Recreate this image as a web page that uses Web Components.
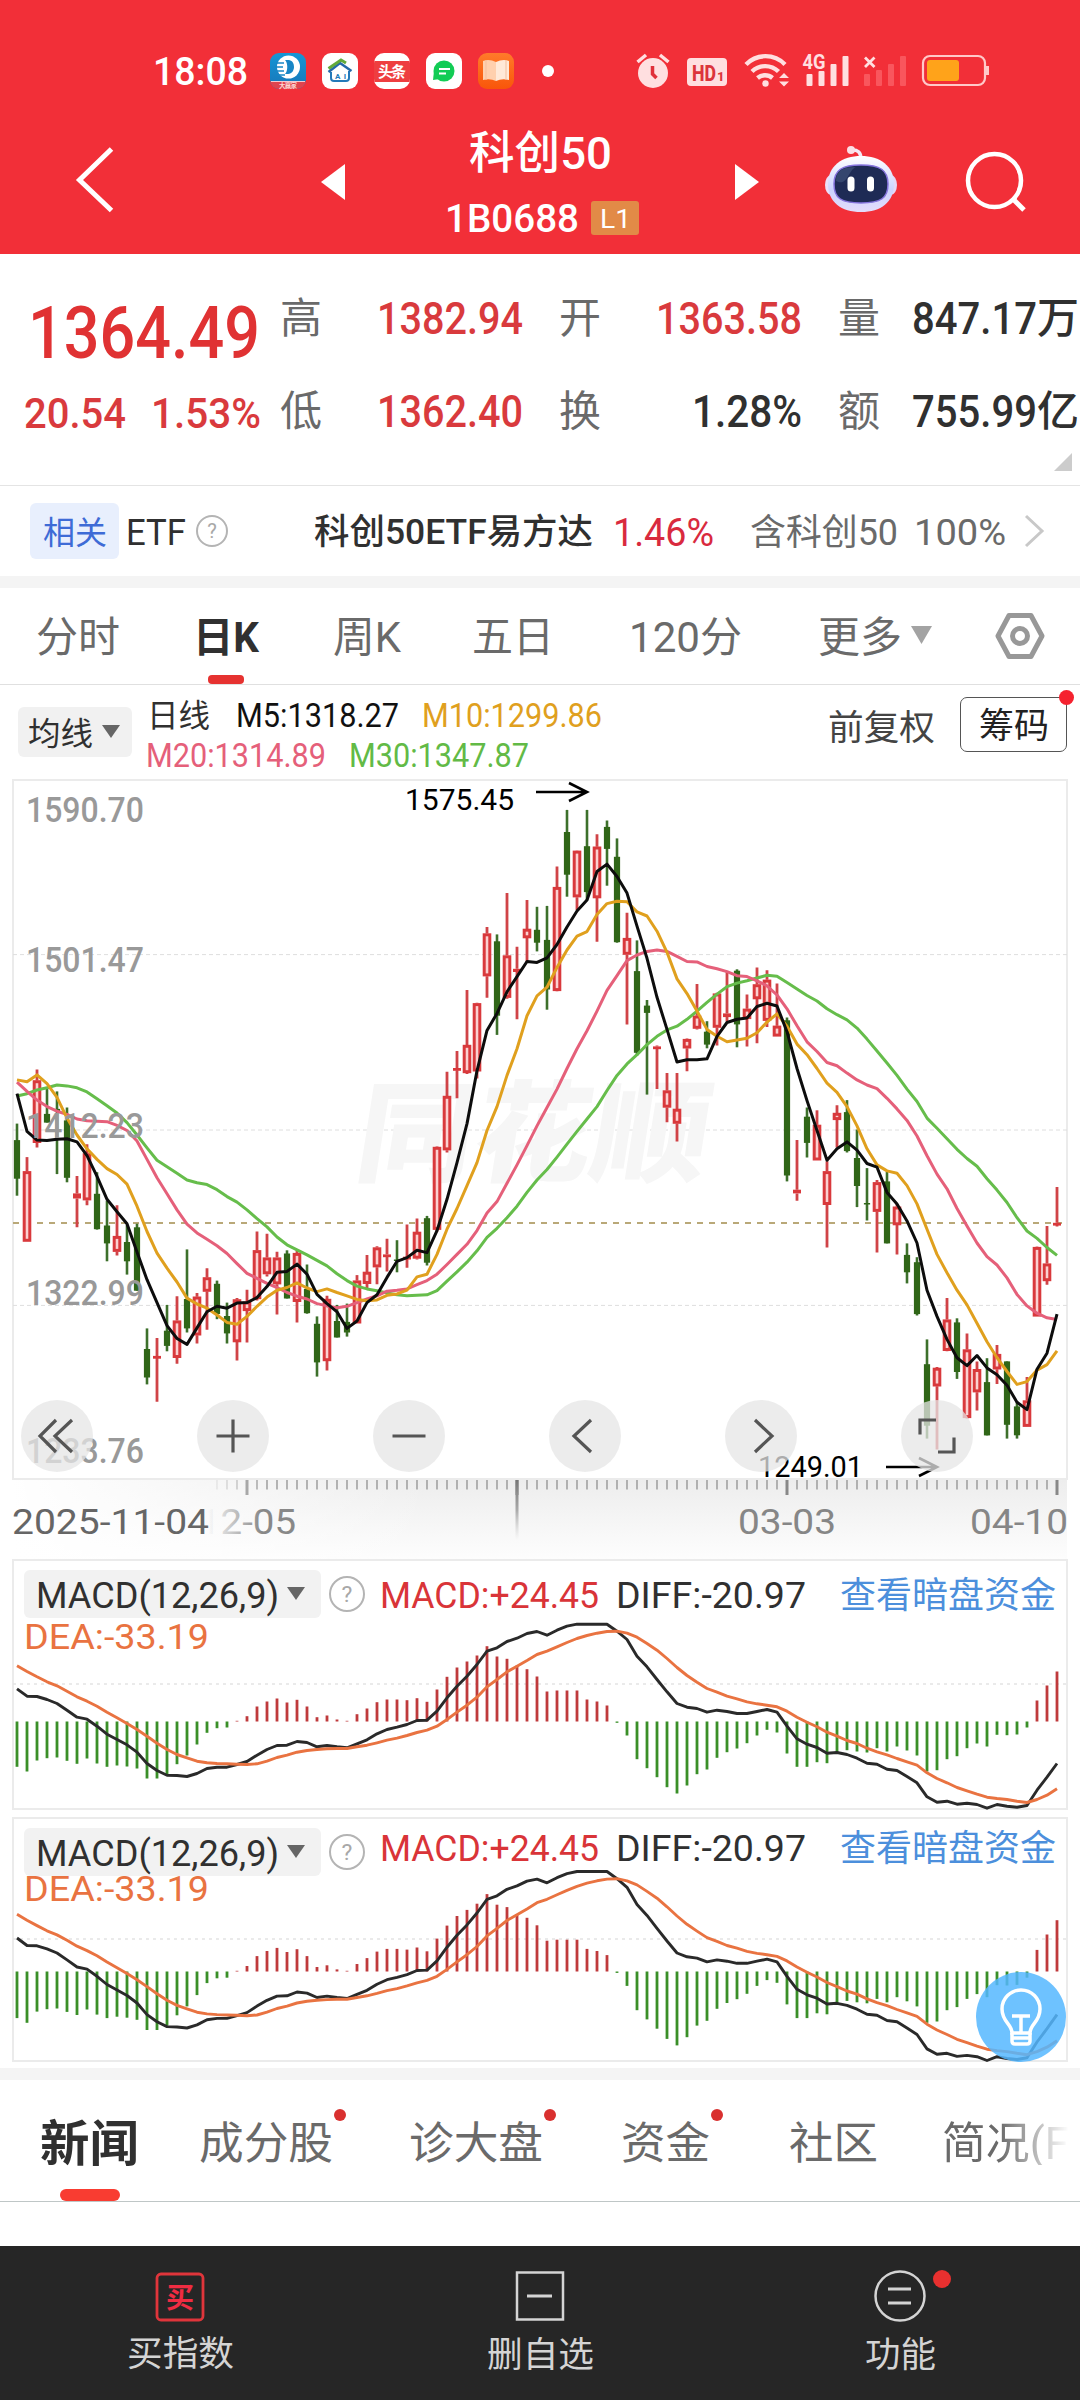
<!DOCTYPE html>
<html lang="zh-CN">
<head>
<meta charset="utf-8">
<title>科创50</title>
<style>
html,body{margin:0;padding:0;background:#fff}
body{width:1080px;height:2400px;overflow:hidden;font-family:Roboto,"Noto Sans CJK SC",sans-serif}
</style>
</head>
<body>
<stock-page></stock-page>
<script>
const define=(name,html,init)=>{
  const t=document.createElement('template');t.innerHTML=html;
  customElements.define(name,class extends HTMLElement{
    connectedCallback(){
      if(this.shadowRoot)return;
      const r=this.attachShadow({mode:'open'});
      const f=t.content.cloneNode(true);
      if(init)init(this,f);
      r.appendChild(f);
    }
  });
};

/* Page */
define('stock-page',`<style>:host{display:flex;flex-direction:column;width:1080px;height:2400px;background:#fff;overflow:hidden}
.band{height:12px;background:#f4f4f4;flex:none}</style>
<app-header></app-header><quote-panel></quote-panel><related-row></related-row><div class="band"></div>
<period-tabs></period-tabs><ma-legend></ma-legend><k-chart></k-chart><date-axis></date-axis>
<macd-chart height="251" shift="0" zero="162.5" scale="1" grid="125"></macd-chart>
<macd-chart height="245" shift="-10" zero="154.5" scale="1.027" grid="122" style="margin-top:7px"><tip-button></tip-button></macd-chart>
<div class="band" style="margin-top:6px"></div><news-tabs></news-tabs><bottom-bar></bottom-bar>`);

/* Header */
define('app-header',`<style>:host{display:flex;flex-direction:column;height:254px;background:#f22f38;color:#fff;flex:none}
.status{display:flex;height:142px;box-sizing:border-box;padding-left:153px}
.status>*{flex:none}
svg{display:block}
.nav{display:flex;height:112px;align-items:flex-start}.nav>*{flex:none}
.mid{display:flex;flex-direction:column;align-items:flex-start;width:200px;margin-left:95px}
.sub{display:flex;align-items:center;margin-top:11px}
.lv{display:flex;width:48px;height:34px;background:#e28a47;border-radius:3px;margin-left:12px;align-items:center;justify-content:center}
</style>
<div class="status">
<fit-text w="95" s="38" b="500" style="margin-top:51px">18:08</fit-text>
<svg width="720" height="60" viewBox="270 40 720 60" style="margin:40px 0 0 22px">
<defs><linearGradient id="bl" x1="0" y1="0" x2="0" y2="1"><stop offset="0" stop-color="#1596d6"/><stop offset="1" stop-color="#1876b8"/></linearGradient>
<linearGradient id="or" x1="0" y1="0" x2="0" y2="1"><stop offset="0" stop-color="#ff7a2a"/><stop offset="1" stop-color="#f9560a"/></linearGradient>
<clipPath id="c1"><rect x="270" y="53" width="36" height="36" rx="9"/></clipPath><clipPath id="c2"><rect x="374" y="53" width="36" height="36" rx="10"/></clipPath></defs>
<g clip-path="url(#c1)"><rect x="270" y="53" width="36" height="36" fill="url(#bl)"/><rect x="270" y="81" width="36" height="8" fill="#e0434e"/><path d="M271 81.500h34" stroke="#f4c9d0" stroke-width="1"/></g>
<circle cx="288.500" cy="67" r="11.500" fill="#fff"/><path d="M285 60h4c4 1 5 4 5 7s-2 7-6 7h-3c3-3 3-11 0-14z" fill="#1886c6"/><path d="M276 63h8M275 67h8M276 71h8M278 75h7" stroke="#1886c6" stroke-width="1.500"/>
<text x="279" y="87.500" font-size="6.500" font-weight="700" fill="#fbd5d0" textLength="18">大赢家</text>
<rect x="322" y="53" width="36" height="36" rx="9" fill="#fff"/>
<path d="M331 72v6q0 3 3 3h12q3 0 3-3v-7" fill="none" stroke="#2379b9" stroke-width="2"/><path d="M328.500 72L340 63l11.500 8" fill="none" stroke="#2468a9" stroke-width="2.500"/><path d="M328.500 68.500L341 60l5 3" fill="none" stroke="#63aa3a" stroke-width="3"/>
<text x="335" y="78.500" font-size="8" font-weight="700" fill="#2379b9" textLength="11">AI</text>
<g clip-path="url(#c2)"><rect x="374" y="53" width="36" height="36" fill="#fff"/><rect x="373" y="61" width="38" height="21" fill="#ee3e40"/></g>
<text x="378" y="77" font-size="15" font-weight="700" fill="#fff" textLength="28">头条</text>
<rect x="426" y="53" width="36" height="36" rx="9" fill="#fff"/><circle cx="444" cy="71" r="10.500" fill="#12cc55"/><path d="M434 71l-1 9 7-1" fill="#12cc55"/><path d="M439 69h11M439 73.500h7" stroke="#fff" stroke-width="1.800"/>
<rect x="478" y="53" width="36" height="36" rx="9" fill="url(#or)"/><path d="M483 61q6-2.500 13 1v19q-6-3-13-1z" fill="#ffd0ae"/><path d="M509 61q-6-2.500-13 1v19q6-3 13-1z" fill="#ffe9d8"/><path d="M486 60v20M506 60v20" stroke="#f3bf9f" stroke-width="1"/>
<circle cx="548" cy="71" r="6" fill="#fff"/>
<g fill="#ffdfe0"><circle cx="653" cy="73" r="15"/><path d="M637.500 62l8.500-7M668.500 62l-8.500-7" stroke="#ffdfe0" stroke-width="3.500"/><path d="M652.500 66v8l4 4" fill="none" stroke="#e0303a" stroke-width="3.500"/>
<rect x="687" y="58" width="40" height="28" rx="4"/></g>
<text x="692" y="80.500" font-size="22" font-weight="800" fill="#dc343c" textLength="24" lengthAdjust="spacingAndGlyphs">HD</text><text x="717" y="80.500" font-size="13" font-weight="800" fill="#dc343c">1</text>
<g fill="none" stroke="#ffdfe0" stroke-width="4.400"><path d="M746 64.500a27 27 0 0 1 39 0"/><path d="M752 71.500a19 19 0 0 1 26.500 0"/><path d="M757.500 78a11.500 11.500 0 0 1 15 0"/></g>
<circle cx="765.500" cy="83.500" r="3.200" fill="#ffdfe0"/><path d="M779 78l5-5 5 5zM779 81.500l5 5 5-5z" fill="#ffdfe0"/>
<text x="802.500" y="69" font-size="20" font-weight="700" fill="#ffdfe0" textLength="23" lengthAdjust="spacingAndGlyphs">4G</text>
<g fill="#ffdfe0"><rect x="806.500" y="74" width="6" height="12" rx="1"/><rect x="818.500" y="71" width="6" height="15" rx="1"/><rect x="830.500" y="64" width="6" height="22" rx="1"/><rect x="842.500" y="56" width="6" height="30" rx="1"/></g>
<g fill="#f9565d"><rect x="864" y="74" width="6" height="12" rx="1"/><rect x="876" y="70" width="6" height="16" rx="1"/><rect x="888" y="64" width="6" height="22" rx="1"/><rect x="900" y="56" width="6" height="30" rx="1"/></g>
<path d="M865 57.500l9.500 9.500M874.500 57.500l-9.500 9.500" stroke="#ffdfe0" stroke-width="2.800"/>
<rect x="923" y="56" width="62" height="29" rx="7" fill="none" stroke="#ffc9c9" stroke-width="2.200"/><rect x="927" y="60" width="32" height="21" rx="3" fill="#ffa31a"/><path d="M987.500 66v9" stroke="#ffc9c9" stroke-width="3"/>
</svg></div>
<div class="nav" style="margin-top:-18px">
<svg width="350" height="100" viewBox="0 124 350 100"><path d="M111.500 149L79.500 180l32 30.500" fill="none" stroke="#fff" stroke-width="5"/><path d="M345 164v36l-24-18z" fill="#fff"/></svg>
<div class="mid" style="margin-left:94px"><fit-text w="143" s="45" b="500" style="margin:5px 0 0 25px">科创50</fit-text>
<div class="sub" style="margin-top:24px"><fit-text w="134" s="39" b="500" style="margin-left:1px">1B0688</fit-text><div class="lv"><fit-text w="31" s="25">L1</fit-text></div></div></div>
<svg width="420" height="100" viewBox="644 124 420 100"><defs><linearGradient id="rb" x1="0" y1="0" x2="0" y2="1"><stop offset="0" stop-color="#fff"/><stop offset=".6" stop-color="#ccd3ff"/><stop offset="1" stop-color="#e3dcfb"/></linearGradient></defs>
<path d="M735 164v36l24-18z" fill="#fff"/>
<path d="M851 150q10-1 10 9" fill="none" stroke="#f5e9f5" stroke-width="3.500"/><circle cx="851" cy="150" r="4" fill="#fbdfe6"/>
<ellipse cx="831" cy="185" rx="6" ry="10" fill="#ecdff8"/><ellipse cx="891" cy="185" rx="6" ry="10" fill="#e5d7f6"/>
<path d="M828 184c0-18 14-28 33-28s33 10 33 28-13 28-33 28-33-10-33-28z" fill="url(#rb)"/>
<path d="M834 184c0-14 8-19 27-19s27 5 27 19-7 19-27 19-27-5-27-19z" fill="#1e2b55" stroke="#8574dd" stroke-width="1.500"/><path d="M836 181c0-10 6-14 20-14-8 3-8 20-20 14z" fill="#45597f" opacity=".6"/>
<path d="M851 180v8M870.500 180v8" stroke="#fff" stroke-width="7" stroke-linecap="round"/>
<circle cx="994.500" cy="180.500" r="26.500" fill="none" stroke="#fff" stroke-width="4.500"/><path d="M1013 199l11 11" stroke="#fff" stroke-width="5"/></svg>
</div>`);

/* Quote */
define('quote-panel',`<style>:host{display:flex;height:231px;flex:none;border-bottom:1.500px solid #e4e4e4;color:#303030;box-sizing:content-box}
.l{width:278px;padding-left:24px;box-sizing:border-box;display:flex;flex-direction:column;color:#e03233}
.row{display:flex;align-items:center}
.g{display:flex;flex-direction:column;color:#303030;width:802px;flex:none}
.r{color:#d93a3d}.k{color:#6a6a6a}
svg{align-self:flex-end;margin-right:8px;margin-top:24px}</style>
<div class="l"><fit-text w="232" s="73" b="500" style="margin:41px 0 0 4px">1364.49</fit-text>
<div class="row" style="margin-top:22px"><fit-text class="r" w="102" s="43" b="500">20.54</fit-text><fit-text class="r" w="110" s="43" b="500" m="25">1.53%</fit-text></div></div>
<div class="g"><div class="row" style="margin-top:40px;height:46px"><fit-text class="k" w="42" s="42" m="2">高</fit-text><fit-text class="r" w="146" s="44" b="500" m="55">1382.94</fit-text><fit-text class="k" w="42" s="42" m="36">开</fit-text><fit-text class="r" w="146" s="44" b="500" m="55">1363.58</fit-text><fit-text class="k" w="42" s="42" m="36">量</fit-text><fit-text w="125" s="44" b="500" m="32">847.17</fit-text><fit-text w="42" s="42" b="500" m="0">万</fit-text></div>
<div class="row" style="margin-top:47px;height:46px"><fit-text class="k" w="42" s="42" m="2">低</fit-text><fit-text class="r" w="146" s="44" b="500" m="55">1362.40</fit-text><fit-text class="k" w="42" s="42" m="36">换</fit-text><fit-text w="110" s="44" b="500" m="91">1.28%</fit-text><fit-text class="k" w="42" s="42" m="36">额</fit-text><fit-text w="125" s="44" b="500" m="32">755.99</fit-text><fit-text w="42" s="42" b="500" m="0">亿</fit-text></div>
<svg width="18" height="18" style="margin-top:20px"><path d="M18 0v18H0z" fill="#ccc"/></svg></div>`);

const HELP=(r)=>`<svg width="${2*r+4}" height="${2*r+4}" viewBox="${-r-2} ${-r-2} ${2*r+4} ${2*r+4}"><circle r="${r}" fill="#fff" stroke="#b4b4b4" stroke-width="2"/><text y="${r*.48}" text-anchor="middle" font-size="${r*1.35}" fill="#a8a8a8">?</text></svg>`;

define('related-row',`<style>:host{display:flex;height:89.500px;flex:none;align-items:center;color:#303030}
.tag{display:flex;align-items:center;justify-content:center;width:89px;height:56px;margin-left:30px;background:#e8effd;border-radius:6px;color:#3e6bd6}
svg{margin-left:9px}</style>
<div class="tag"><fit-text w="64" s="32">相关</fit-text></div><fit-text w="60" s="36" m="7">ETF</fit-text>${HELP(15)}
<fit-text w="279" s="35" b="500" m="85">科创50ETF易方达</fit-text><fit-text w="101" s="38" m="20" style="color:#d92a3e">1.46%</fit-text>
<fit-text w="148" s="36" m="36" style="color:#6a6a6a">含科创50</fit-text><fit-text w="92" s="37" m="16" style="color:#6a6a6a">100%</fit-text>
<svg width="24" height="34" style="margin-left:17px" fill="none" stroke="#c8c8c8" stroke-width="3"><path d="M3 2l16 15L3 32"/></svg>`);

define('period-tabs',`<style>:host{display:flex;height:96px;flex:none;align-items:center;border-bottom:1.500px solid #e0e0e0;color:#6a6a6a}
.on{display:flex;flex-direction:column;align-items:center;height:96px;margin-left:73px;color:#303030;padding-top:27px;box-sizing:border-box}
.on i{width:36px;height:9px;border-radius:4px;background:#e63230;margin-top:auto}</style>
<fit-text w="84" s="42" m="36">分时</fit-text><div class="on"><fit-text w="66" s="42" b="700">日K</fit-text><i></i></div>
<fit-text w="68" s="42" m="74">周K</fit-text><fit-text w="82" s="42" m="71">五日</fit-text><fit-text w="113" s="42" m="75">120分</fit-text><fit-text w="84" s="42" m="76">更多</fit-text>
<svg width="24" height="20" style="margin-left:8px"><path d="M1 0h21L11.500 18z" fill="#a3a3a3"/></svg>
<svg width="52" height="50" viewBox="-26 -25 52 50" style="margin-left:60px" fill="none" stroke="#989898" stroke-width="5" stroke-linejoin="round"><path d="M-11-20.500h22L22 0 11 20.500h-22L-22 0z"/><circle r="7.500"/></svg>`);

define('ma-legend',`<style>:host{display:flex;height:94.500px;flex:none;color:#303030}
.chip{display:flex;align-items:center;width:114px;height:50px;background:#f1f1f1;border-radius:6px;margin:22px 0 0 18px;flex:none}
.m{display:flex;flex-direction:column;width:697px;flex:none}.row{display:flex;align-items:center;height:34px}
.box{position:relative;display:flex;align-items:center;justify-content:center;width:107px;height:55px;box-sizing:border-box;border:1.500px solid #555;border-radius:7px;margin:12px 0 0 25px;color:#222;flex:none}
.box i{position:absolute;right:-8px;top:-8px;width:15px;height:15px;border-radius:50%;background:#f5222f}</style>
<div class="chip"><fit-text w="65" s="32" m="10">均线</fit-text><svg width="20" height="14" style="margin-left:9px"><path d="M0 0h18L9 13z" fill="#666"/></svg></div>
<div class="m"><div class="row" style="margin-top:12px"><fit-text w="63" s="32" m="15">日线</fit-text><fit-text w="163" s="33" b="450" m="26" style="color:#111">M5:1318.27</fit-text><fit-text w="180" s="33" b="450" m="23" style="color:#e0a01e">M10:1299.86</fit-text></div>
<div class="row" style="margin-top:6px"><fit-text w="180" s="33" b="450" m="14" style="color:#e5607a">M20:1314.89</fit-text><fit-text w="180" s="33" b="450" m="23" style="color:#62ba46">M30:1347.87</fit-text></div></div>
<fit-text w="107" s="35.500" style="margin-top:24px;margin-left:-1px;color:#444">前复权</fit-text><div class="box"><fit-text w="70" s="35">筹码</fit-text><i></i></div>`);

/* Series data, one entry per trading day, in plot units */
const CANDLES=`g770,806,890,927 r843,874,1027,1027 r652,676,812,822 g690,749,768,768 g700,738,743,880 g735,763,888,898 r884,922,933,996 r815,835,937,948 g876,923,1000,1001 g938,992,1031,1070 r948,1015,1049,1057 g990,1028,1070,1099 g988,996,1134,1134 g1216,1261,1323,1338 r1237,1276,1280,1376 g1165,1221,1254,1266 r1146,1199,1280,1293 g1044,1152,1216,1225 r1139,1147,1231,1249 r1085,1105,1136,1219 g1112,1119,1185,1196 g1160,1189,1227,1249 r1150,1153,1246,1286 r1132,1158,1178,1247 r1005,1046,1152,1155 r1010,1062,1098,1103 r1049,1062,1120,1186 g1046,1053,1151,1151 r1047,1052,1158,1203 g1077,1130,1183,1184 g1190,1206,1290,1321 r1145,1152,1287,1308 g1165,1200,1236,1236 g1162,1202,1225,1234 r1100,1112,1205,1205 r1056,1093,1119,1130 r1037,1040,1083,1120 r1021,1055,1058,1092 g1024,1066,1068,1094 r990,1060,1065,1084 r977,1006,1064,1066 g971,976,1073,1079 r820,821,1001,1005 r657,710,828,833 r612,649,654,715 r479,599,660,662 r507,508,656,672 r342,356,449,496 g358,373,535,577 r268,404,496,498 r385,433,440,543 r283,346,366,418 g298,348,376,395 g296,370,478,522 r210,255,481,482 g87,135,228,276 r175,176,277,305 g87,166,266,284 r140,167,279,374 g110,124,172,252 g149,189,375,376 r311,366,402,554 g371,438,616,622 g501,513,529,707 r600,602,607,695 r660,698,735,767 r660,738,770,809 r585,586,606,656 r466,535,563,565 g547,570,598,606 r485,487,561,600 r440,530,538,548 g434,437,554,604 r489,520,542,602 r430,467,499,595 r436,457,546,560 r465,557,580,580 g539,545,883,896 r806,914,922,938 g735,755,812,844 r741,773,850,850 r852,874,947,1040 r730,747,762,822 g719,745,830,833 g783,845,906,952 g867,943,946,981 r893,898,962,1051 g875,896,1031,1031 r945,951,991,1055 g1031,1056,1094,1118 g1061,1072,1185,1188 g1240,1294,1428,1456 r1300,1302,1342,1480 r1150,1197,1265,1266 g1194,1203,1311,1326 r1227,1262,1411,1412 r1288,1305,1355,1395 g1281,1333,1449,1449 r1252,1272,1305,1337 g1288,1288,1426,1456 g1375,1386,1449,1456 r1322,1373,1430,1430 r1038,1039,1190,1190 r993,1075,1113,1121 r908,986,991,994`.split(' ').map(s=>[s[0],...s.slice(1).split(',').map(Number)]);
const MA={
'#0d0d0d':[705,787,806,807,804,803,810,840,885,935,962,988,1050,1110,1160,1210,1238,1251,1215,1180,1168,1172,1161,1160,1149,1125,1094,1092,1076,1098,1142,1162,1180,1216,1200,1160,1143,1105,1070,1062,1046,1051,1003,935,855,770,655,567,530,483,450,417,419,409,380,342,307,283,221,205,232,268,340,410,495,565,636,631,631,629,580,550,543,540,515,508,514,570,650,720,785,850,825,810,828,857,865,920,945,982,1030,1133,1190,1240,1280,1297,1275,1302,1317,1340,1377,1393,1305,1270,1185],
'#e0a01e':[675,679,664,683,713,758,795,825,848,868,881,902,950,1005,1052,1085,1115,1150,1163,1172,1187,1203,1207,1190,1168,1148,1133,1127,1117,1128,1136,1130,1138,1145,1153,1156,1154,1144,1141,1133,1104,1098,1055,1000,955,905,855,785,733,665,607,535,492,473,430,392,362,352,315,291,286,287,309,318,351,397,455,487,525,565,580,592,588,584,572,549,531,558,597,620,650,682,702,733,775,825,860,873,878,905,945,1000,1055,1095,1133,1165,1205,1245,1280,1310,1338,1332,1307,1295,1265],
'#e5607a':[680,700,719,733,743,750,760,764,765,766,774,785,808,848,888,923,958,989,1008,1022,1036,1053,1075,1096,1107,1118,1127,1138,1146,1152,1162,1167,1171,1168,1160,1152,1145,1135,1133,1130,1121,1112,1098,1077,1055,1033,1003,965,940,900,860,818,775,735,695,650,607,568,525,480,448,415,403,395,392,395,406,417,418,428,433,439,448,450,459,470,490,520,557,592,613,637,644,660,675,686,694,715,738,763,797,840,880,912,955,993,1030,1060,1078,1106,1142,1167,1183,1193,1197],
'#66bd4b':[710,705,697,692,686,688,692,701,716,731,747,768,795,823,850,864,878,893,899,903,914,929,941,958,977,995,1017,1034,1045,1056,1068,1080,1097,1112,1124,1130,1134,1139,1143,1145,1144,1143,1134,1113,1093,1072,1047,1018,998,975,950,920,893,870,843,815,787,760,733,698,665,640,620,598,580,566,558,543,525,506,488,472,464,459,453,447,449,463,477,491,503,520,533,544,562,586,612,638,665,695,722,758,780,803,826,846,863,890,915,942,975,1004,1020,1040,1057]};
const BARS=[922,936,903,896,894,904,913,897,912,922,918,921,927,957,957,944,914,888,855,820,806,804,784,770,741,726,717,729,721,741,773,768,780,784,764,747,728,720,720,722,716,727,690,652,624,606,588,560,591,598,618,629,651,696,693,693,693,720,726,738,790,828,899,926,953,983,1002,978,944,930,895,878,867,851,828,811,819,882,922,922,908,911,880,872,876,879,866,876,861,873,888,936,932,899,890,866,852,861,826,827,825,804,723,678,636];
const DIFF=[688,710,711,720,732,752,773,779,800,824,840,856,878,912,933,947,948,951,942,927,923,923,915,906,887,870,858,857,846,849,862,858,862,865,853,841,823,810,803,795,783,782,755,715,680,650,615,575,565,546,536,522,516,527,512,500,494,494,494,494,515,540,590,622,660,697,732,743,747,758,752,756,762,762,756,750,758,800,838,854,864,881,879,885,896,911,914,929,933,951,970,1012,1028,1025,1034,1031,1035,1046,1035,1040,1043,1038,992,953,912];
const DEA=[619,636,652,667,679,695,712,725,740,758,775,792,810,830,851,870,885,895,905,910,912,913,914,915,913,905,894,887,878,873,870,868,867,867,862,857,850,842,836,828,819,812,800,780,758,737,713,682,660,637,620,603,585,575,562,549,537,528,521,516,515,521,533,552,572,597,624,648,668,687,698,710,718,727,733,737,742,755,773,788,802,818,830,843,852,866,877,886,897,907,917,940,957,970,984,994,1004,1013,1017,1020,1025,1029,1020,1007,988];
const X=i=>17+10*i, f1=n=>n.toFixed(1);
const line=(a,y,c,w)=>`<polyline fill="none" stroke="${c}" stroke-width="${w}" stroke-linejoin="round" points="${a.map((v,i)=>X(i)+','+f1(y(v))).join(' ')}"/>`;
const txt=(x,y,w,s,c,t,b=400)=>`<text x="${x}" y="${y}" font-size="${s}" fill="${c}" font-weight="${b}" textLength="${w}" lengthAdjust="spacingAndGlyphs">${t}</text>`;

const KY=v=>770+v/2.1778;
let k='';
for(const v of [402,784,1166])k+=`<path d="M13 ${f1(KY(v))}H1067" stroke="#dedede" stroke-width="1" stroke-dasharray="4 3"/>`;
k+=`<text transform="translate(352 1173) skewX(-9)" font-size="110" font-weight="900" fill="#f6f6f6" textLength="352" lengthAdjust="spacingAndGlyphs">同花顺</text>`;
k+=`<path d="M13 1223H1062" stroke="#b9a878" stroke-width="1.800" stroke-dasharray="6 6"/>`;
CANDLES.forEach(([t,h,a,b,l],i)=>{
  const x=X(i),H=KY(h),A=KY(a),B=KY(b),L=KY(l);
  if(t==='g')k+=`<path d="M${x} ${f1(H)}V${f1(L)}" stroke="#3d702b" stroke-width="2.600"/><rect x="${x-3.1}" y="${f1(A)}" width="6.200" height="${f1(Math.max(1.5,B-A))}" fill="#306618"/>`;
  else{
    k+=`<path d="M${x} ${f1(H)}V${f1(A)}M${x} ${f1(B)}V${f1(L)}" stroke="#d04347" stroke-width="2.800"/>`;
    if(b-a<14)k+=`<rect x="${x-4}" y="${f1(A)}" width="8" height="${f1(Math.max(2.8,B-A))}" fill="#d9393c"/>`;
    else k+=`<rect x="${x-2.8}" y="${f1(A+1.3)}" width="5.600" height="${f1(B-A-2.6)}" fill="#fbd0d0" stroke="#d9393c" stroke-width="3"/>`;
  }
});
const labels=[['1590.70',821.5],['1501.47',972],['1412.23',1137.5],['1322.99',1305],['1233.76',1462.5]].map(([t,y])=>txt(26,y,118,35,'#999',t,500)).join('');
for(const c of ['#66bd4b','#e5607a','#e0a01e','#0d0d0d'])k+=line(MA[c],KY,c,3);
k+=labels;
k+=txt(405,810,109,29,'#000','1575.45')+txt(758,1477,105,29,'#000','1249.01');
const arrow=(x,y)=>`<path d="M${x} ${y}h50M${x+33} ${y-9}l18 9-18 9" fill="none" stroke="#000" stroke-width="2.600"/>`;
k+=arrow(536,792)+arrow(886,1467);

define('k-chart',`<style>:host{display:block;position:relative;height:701px;margin:0 12px;flex:none;border:2px solid #ebebeb;box-sizing:border-box}
svg.p{position:absolute;left:-14px;top:-11px}
.b{position:absolute;left:7px;top:619px;display:flex;gap:104px}
.b span{width:72px;height:72px;border-radius:50%;background:rgba(230,230,230,.75);display:flex}
.b svg{margin:auto;fill:none;stroke:#555;stroke-width:3.2}</style>
<svg class="p" width="1080" height="720" viewBox="0 770 1080 720">${k}</svg>
<div class="b">${['M-1-16L-17 0-1 16M15-16L-2 0l17 16','M-16.500 0h33M0-16.500v33','M-16.500 0h33','M6-16L-11 0 6 16','M-6-16L11 0-6 16','M-17-1.500V-16H-1M17 1.500V16H1'].map(d=>`<span><svg width="40" height="40" viewBox="-20 -20 40 40"><path d="${d}"/></svg></span>`).join('')}</div>`);

let ax='';
for(let x=217;x<=1057;x+=10){
  const major=[247,517,787,1057].includes(x);
  ax+=`<path d="M${x} 1480V${major?1495:1489.500}" stroke="#888" stroke-width="${major?3:1.2}" opacity="${Math.min(1,(x-205)/60)}"/>`;
}
define('date-axis',`<style>:host{display:block;height:79px;flex:none}svg{display:block}</style>
<svg width="1080" height="79" viewBox="0 1480 1080 79"><defs>
<linearGradient id="v" x1="0" y1="0" x2="0" y2="1"><stop offset="0" stop-color="#ededed"/><stop offset=".8" stop-color="#fafafa"/><stop offset="1" stop-color="#fdfdfd"/></linearGradient>
<linearGradient id="h" x1="0" x2="1"><stop offset="0" stop-color="#fff"/><stop offset="1" stop-color="#fff" stop-opacity="0"/></linearGradient>
<linearGradient id="n" x1="0" y1="0" x2="0" y2="1"><stop offset="0" stop-color="#777"/><stop offset=".5" stop-color="#aaa"/><stop offset="1" stop-color="#ccc" stop-opacity="0"/></linearGradient>
<linearGradient id="d" gradientUnits="userSpaceOnUse" x1="208" x2="262" y1="0" y2="0"><stop offset="0" stop-color="#888" stop-opacity="0"/><stop offset="1" stop-color="#888"/></linearGradient></defs>
<rect x="13" y="1480" width="1054" height="79" fill="url(#v)"/><rect x="12" y="1480" width="420" height="79" fill="url(#h)"/>
${ax}<rect x="515.500" y="1480" width="3" height="60" fill="url(#n)"/>
${txt(12,1534,197,35,'#666','2025-11-04',450)+txt(199,1534,97,35,'url(#d)','12-05',450)+txt(738,1534,98,35,'#868686','03-03',450)+txt(970,1534,98,35,'#868686','04-10',450)}</svg>`);

define('macd-chart',`<style>:host{display:block;position:relative;flex:none;margin:0 12px;border:2px solid #ebebeb;box-sizing:border-box}
.p{position:absolute;left:-14px;top:-2px}
.row{position:relative;display:flex;align-items:center;height:50px;padding-top:8px;color:#303030}
.chip{display:flex;align-items:center;width:297px;height:48px;background:#f2f2f2;border-radius:6px;margin-left:10px}
.dea{position:relative;display:block;margin-left:10px;color:#e97341}
.q{display:flex;margin-left:7px}
::slotted(tip-button){position:absolute;right:0;bottom:-2px}</style>
<svg class="p" width="1080"></svg>
<div class="row"><div class="chip"><fit-text w="243" s="36" m="12">MACD(12,26,9)</fit-text><svg width="20" height="14" style="margin-left:8px"><path d="M0 0h18L9 13z" fill="#666"/></svg></div>
<span class="q">${HELP(17)}</span><fit-text class="s" w="219" s="36" b="450" m="14" style="color:#d93438">MACD:+24.45</fit-text><fit-text class="s" w="190" s="36" m="17" b="450">DIFF:-20.97</fit-text><fit-text class="s" w="216" s="36" m="34" style="color:#4c8fdc">查看暗盘资金</fit-text></div>
<fit-text class="dea" w="185" s="35" b="450">DEA:-33.19</fit-text><slot></slot>`,(el,f)=>{
  const g=n=>+el.getAttribute(n);
  el.style.height=g('height')+'px';
  const y=v=>g('zero')+(v-786)/3*g('scale');
  let s=`<path d="M13 ${g('grid')}H1067" stroke="#e4e4e4" stroke-width="1.500" stroke-dasharray="3 4"/>`;
  BARS.forEach((v,i)=>{const a=y(786),b=y(v);s+=`<rect x="${X(i)-1.4}" width="2.800" y="${f1(Math.min(a,b))}" height="${f1(Math.abs(a-b))}" fill="${v<786?'#bf3a3c':'#3a8f28'}"/>`});
  s+=line(DIFF,y,'#2a2a2a',2.9)+line(DEA,y,'#e97341',2.9);
  const p=f.querySelector('.p');p.setAttribute('height',g('height'));p.innerHTML=s;
  f.querySelectorAll('.s').forEach(e=>e.style.marginTop=g('shift')+'px');
  f.querySelector('.dea').style.marginTop=(g('shift')?-7.5:-1)+'px';
});

define('tip-button',`<style>:host{display:flex;width:90px;height:90px;border-radius:50%;background:rgba(85,183,255,.85)}svg{margin:auto}</style>
<svg width="50" height="64" viewBox="-25 -32 50 64" fill="none" stroke="#fff" stroke-width="3.500"><path d="M-9 16c0-9-10-11-10-24a19 19 0 0 1 38 0c0 13-10 15-10 24z"/><path d="M-9 16v8q0 3 3 3H6q3 0 3-3v-8M-9-1H9M0-1v16M-9 21H9"/></svg>`);

define('news-tabs',`<style>:host{display:flex;height:120.500px;flex:none;border-bottom:1.500px solid #bfc6c6;margin-bottom:44.500px;color:#6a6a6a;align-items:flex-start;overflow:hidden}
.on{display:flex;flex-direction:column;align-items:center;height:120.500px;box-sizing:border-box;padding-top:38px;margin-left:40px;color:#303030}
.on i{width:60px;height:12px;border-radius:6px;background:#f93c31;margin-top:auto}
.t{position:relative;margin-top:40px;line-height:0}.t i{position:absolute;right:-13px;top:-11px;width:12px;height:12px;border-radius:50%;background:#d9302f}
.f{-webkit-mask-image:linear-gradient(90deg,#000 45%,transparent 100%)}</style>
<div class="on"><fit-text w="99" s="49" b="700">新闻</fit-text><i></i></div>
<div class="t" style="margin-left:60px"><fit-text w="134" s="44.500">成分股</fit-text><i></i></div>
<div class="t" style="margin-left:76px"><fit-text w="134" s="44.500">诊大盘</fit-text><i></i></div>
<div class="t" style="margin-left:78px"><fit-text w="89" s="44.500">资金</fit-text><i></i></div>
<div class="t" style="margin-left:79px"><fit-text w="89" s="44.500">社区</fit-text></div>
<div class="t f" style="margin-left:64px"><fit-text w="127" s="44.500">简况(F</fit-text></div>`);

define('bottom-bar',`<style>:host{display:flex;flex:1;background:#262626;color:#d4d4d4}
div{flex:1;display:flex;flex-direction:column;align-items:center;padding-top:20px}svg{overflow:visible}</style>
<div><svg width="60" height="60" viewBox="-30 -30 60 60"><rect x="-23" y="-22" width="46" height="46" rx="4" fill="none" stroke="#e0353b" stroke-width="2.800"/><text x="-14" y="12" font-size="28" font-weight="700" fill="#f02c42">买</text></svg><fit-text w="107" s="35.500" style="margin-top:9px">买指数</fit-text></div>
<div><svg width="60" height="60" viewBox="-30 -30 60 60" fill="none" stroke="#d4d4d4"><rect x="-23" y="-23.500" width="46" height="47" stroke-width="2.500"/><path d="M-13 0h25" stroke-width="3"/></svg><fit-text w="107" s="35.500" style="margin-top:10px">删自选</fit-text></div>
<div><svg width="60" height="60" viewBox="-30 -30 60 60" fill="none" stroke="#d4d4d4"><circle r="24.500" stroke-width="2.500"/><path d="M-12-7h23M-12 7h23" stroke-width="3"/><circle cx="42" cy="-17" r="9" fill="#e8302f" stroke="none"/></svg><fit-text w="71" s="35.500" style="margin-top:10px">功能</fit-text></div>`);

/* Text run set to an exact width: the glyphs are condensed or widened to fill it */
customElements.define('fit-text',class extends HTMLElement{
  connectedCallback(){
    if(this.shadowRoot)return;
    const r=this.attachShadow({mode:'open'}),g=n=>this.getAttribute(n);
    r.innerHTML=`<style>:host{display:inline-block;flex:none;white-space:nowrap;line-height:1;width:${g('w')}px;height:${g('s')}px;font-size:${g('s')}px;font-weight:${g('b')||400};${g('m')?`margin-left:${g('m')}px`:''}}span{display:inline-block;transform-origin:0 50%}</style><span><slot></slot></span>`;
    const s=r.querySelector('span'),n=s.getBoundingClientRect().width;
    if(n)s.style.transform=`translateY(1.500px) scaleX(${g('w')/n})`;
  }
});
</script>
</body>
</html>
